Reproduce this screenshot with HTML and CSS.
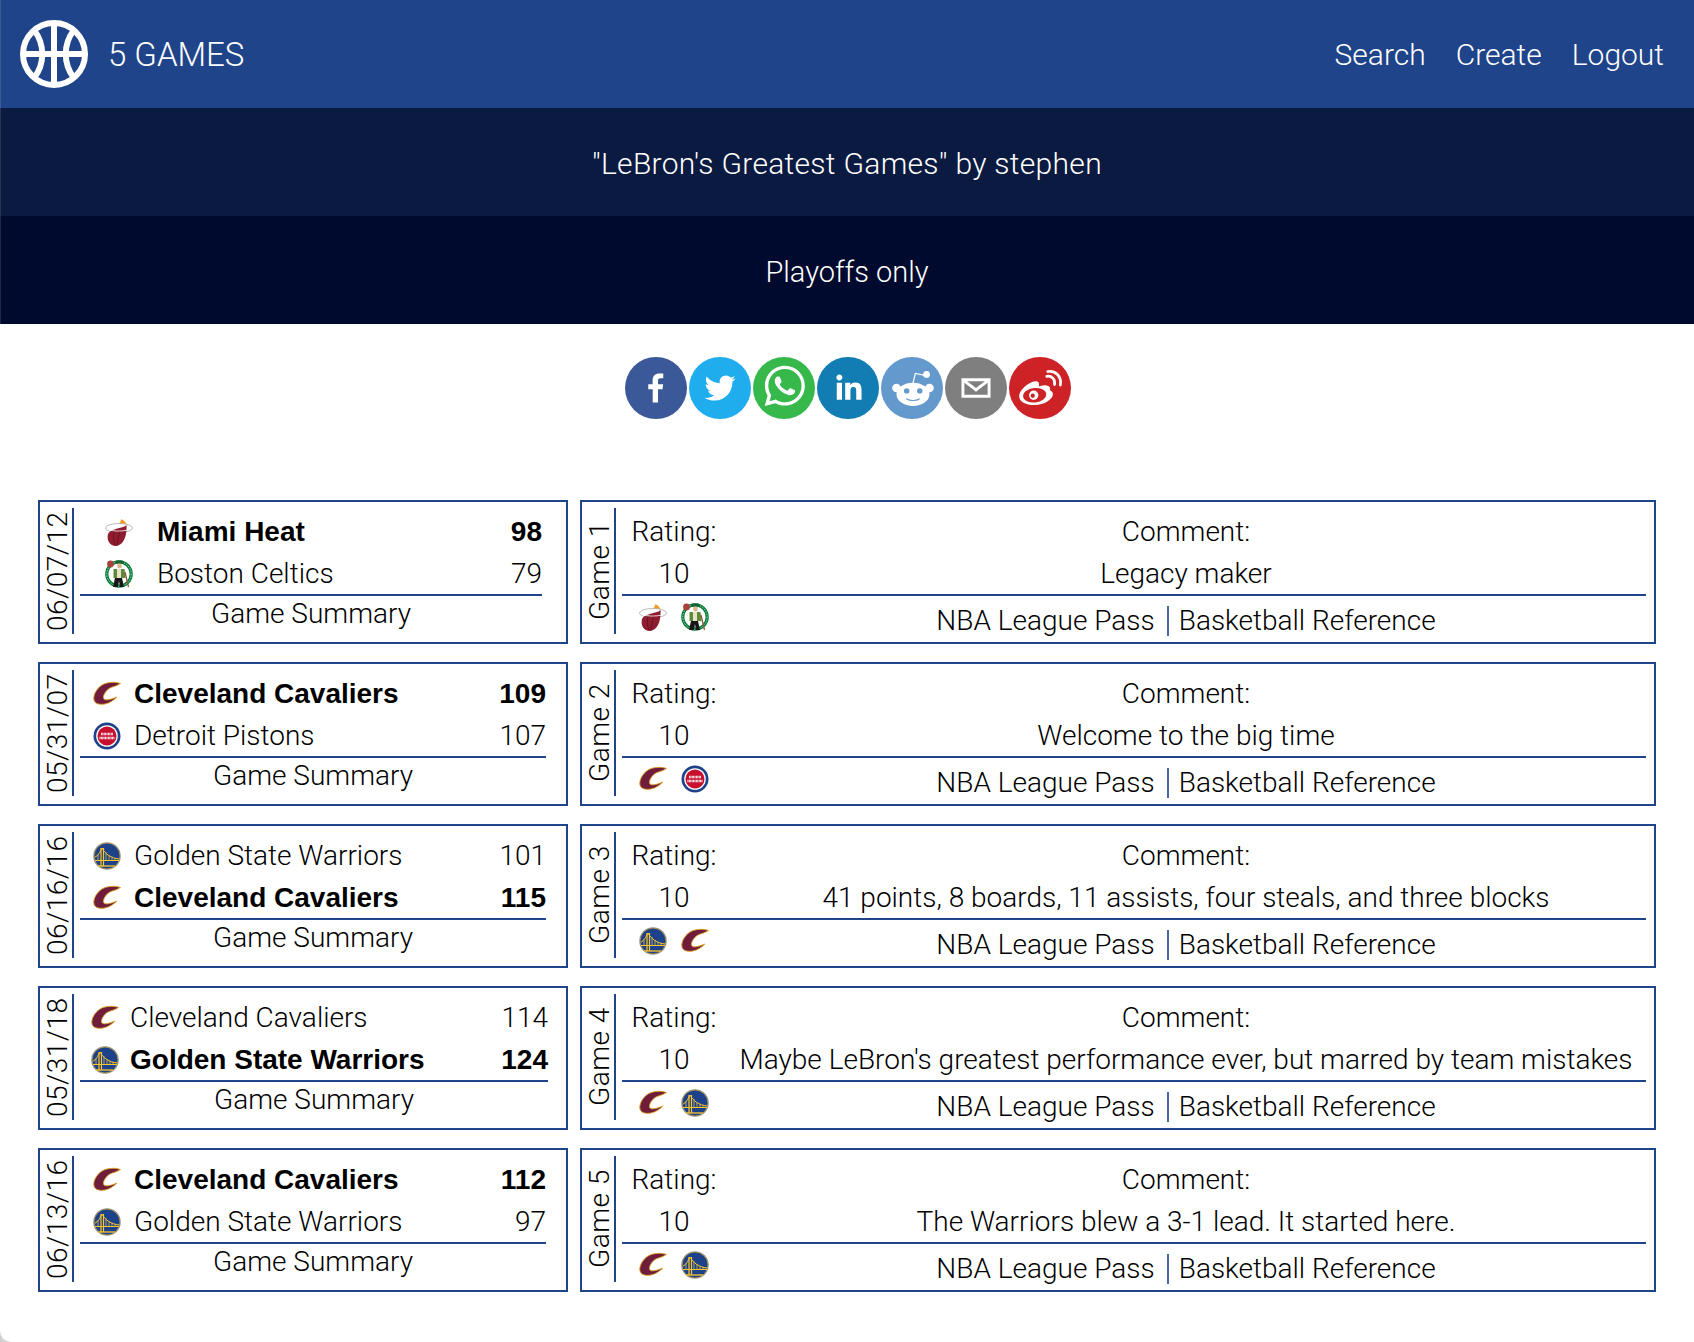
FILE: index.html
```html
<!DOCTYPE html>
<html lang="en">
<head>
	<meta charset="UTF-8">
	<meta name="viewport" content="width=device-width, initial-scale=1.0">
	<title>5 Games</title>
	<link rel="stylesheet" href="styles.css">
</head>
<body>
	<svg class="defs" aria-hidden="true">
		<symbol id="heat" viewBox="0 0 28 28">
			<path d="M13 7c1.500-1.500 3-3 3-6 .8 1 1.500 1.500 2 .5.5 1.500 4 3 3.500 6z" fill="#f39c1f"/>
			<ellipse cx="14" cy="10" rx="13.500" ry="4.500" fill="#fff" stroke="#a7a9ac" stroke-width=".8"/>
			<path d="M21.500 7c.5 7-1 20-10.500 21-6.500 0-9.500-6-8-12 1.500-3.500 8-5 11-6 3-1 5.500-1 7.500-3z" fill="#8f1d2f"/>
			<path d="M9 13c-1 4-1 9 1 14M15 12c-1 4-2 9-3 15" stroke="#5f0f1e" stroke-width=".8" fill="none"/>
			<path d="M3 11.500c5 2 14 2 20 .5" stroke="#fff" stroke-width=".8" fill="none"/>
		</symbol>
		<symbol id="celtics" viewBox="0 0 28 28">
			<circle cx="14" cy="14" r="12.200" fill="#fff" stroke="#007a33" stroke-width="3.200"/>
			<circle cx="14" cy="14" r="12.200" fill="none" stroke="#fff" stroke-width=".7" stroke-dasharray="1.500 1.200"/>
			<circle cx="5.500" cy="4" r="3.400" fill="#a8423d"/>
			<path d="M10 3.500h9l-1.500-3h-6z" fill="#1c5f33"/>
			<circle cx="14.500" cy="6" r="2.400" fill="#d9b98c"/>
			<path d="M8.500 9h11l1 9h-12z" fill="#5f8a3a"/>
			<path d="M12 9h4v9h-4z" fill="#e8e4c8"/>
			<path d="M10 18l-2 9h5l1-6 1 6h4l-2-9z" fill="#161616"/>
			<path d="M20 12l3.500 15" stroke="#8a5d3b" stroke-width="1.300"/>
		</symbol>
		<symbol id="cavs" viewBox="0 0 28 28">
			<path d="M27.500 3.500C22 1.500 14 2 9 5 3 9 .5 15 .8 19c.4 5 6.200 6 11.200 5 5-1 9-4 12-7-5 2-11 4-13 2-2-2.500 2-9 6-11 3-1.500 7-2 10.500-4.500z" fill="#6f1d3a" stroke="#e0a526" stroke-width=".9"/>
		</symbol>
		<symbol id="pistons" viewBox="0 0 28 28">
			<circle cx="14" cy="14" r="13.500" fill="#1d428a"/>
			<circle cx="14" cy="14" r="10.800" fill="#fff"/>
			<circle cx="14" cy="14" r="9.500" fill="#c8102e"/>
			<path d="M8 12h12M6.500 16h15" stroke="#fff" stroke-width="2.400" stroke-dasharray=".9 .5" fill="none"/>
		</symbol>
		<symbol id="warriors" viewBox="0 0 28 28">
			<circle cx="14" cy="14" r="13.800" fill="#8f9bb3"/>
			<circle cx="14" cy="14" r="13" fill="#1d428a" stroke="#d8a92c" stroke-width=".7"/>
			<path d="M8 6v18M10.500 6v18M2 18.500h24" stroke="#ffc72c" stroke-width="1.200" fill="none"/>
			<path d="M9 6c3 6 9 10 17 11M9 6c-2 4-4 8-7 9" stroke="#ffc72c" stroke-width="1" fill="none"/>
			<path d="M13 10v8M16 13v5M19 15v3M22 16v2M5 12v6" stroke="#ffc72c" stroke-width=".7"/>
			<path d="M5 24h17" stroke="#ffc72c" stroke-width="1.300"/>
		</symbol>
	</svg>

	<header class="top-bar">
		<a class="brand" href="#">
			<svg class="brand-logo" viewBox="0 0 68 68">
				<g fill="none" stroke="#fff" stroke-width="6">
					<circle cx="34" cy="34" r="31"/>
					<path d="M34 2v64M2 34h64"/>
					<path d="M14 10c11 14 11 34 0 48M54 10c-11 14-11 34 0 48"/>
				</g>
			</svg>
			<span class="brand-name">5 GAMES</span>
		</a>
		<nav class="top-nav">
			<a href="#">Search</a>
			<a href="#">Create</a>
			<a href="#">Logout</a>
		</nav>
	</header>
	<div class="title-bar">"LeBron's Greatest Games" by stephen</div>
	<div class="note-bar">Playoffs only</div>

	<div class="share">
		<svg class="share-icon" viewBox="0 0 64 64"><circle cx="32" cy="32" r="32" fill="#3b5998"/><path fill="#fff" d="M34.100 47V33.300h4.600l.7-5.300h-5.300v-3.400c0-1.500.4-2.600 2.600-2.600l2.800 0v-4.800c-.5-.1-2.200-.2-4.100-.2-4.100 0-6.900 2.500-6.900 7V28H24v5.300h4.600V47h5.500z"/></svg>
		<svg class="share-icon" viewBox="0 0 64 64"><circle cx="32" cy="32" r="32" fill="#1fadee"/><path fill="#fff" d="M48 22.100c-1.200.5-2.400.9-3.800 1 1.400-.8 2.400-2.100 2.900-3.600-1.300.8-2.700 1.300-4.200 1.600C41.700 19.800 40 19 38.200 19c-3.600 0-6.600 2.900-6.600 6.600 0 .5.1 1 .2 1.500-5.500-.3-10.300-2.900-13.500-6.900-.6 1-.9 2.100-.9 3.300 0 2.300 1.200 4.300 2.900 5.500-1.100 0-2.100-.3-3-.8v.1c0 3.200 2.300 5.800 5.300 6.400-.6.1-1.100.2-1.700.2-.4 0-.8 0-1.200-.1.8 2.600 3.300 4.500 6.100 4.600-2.200 1.800-5.100 2.800-8.200 2.800-.5 0-1.100 0-1.600-.1 2.900 1.900 6.400 2.900 10.100 2.900 12.100 0 18.700-10 18.700-18.700v-.8c1.300-.9 2.400-2 3.300-3.300z"/></svg>
		<svg class="share-icon" viewBox="0 0 64 64"><circle cx="32" cy="32" r="32" fill="#37b84b"/><path fill="#fff" d="m42.323 33.933c-.518-.259-3.047-1.496-3.521-1.667-.471-.173-.816-.259-1.160.259-.342.510-1.331 1.665-1.631 2.006-.300.337-.601.362-1.113.129-.518-.259-2.180-.803-4.148-2.563-1.533-1.372-2.563-3.055-2.866-3.573-.300-.518-.034-.803.225-1.061.233-.233.518-.595.777-.906.254-.311.337-.518.513-.854.171-.362.085-.647-.044-.906-.129-.259-1.160-2.796-1.590-3.806-.414-1.010-.841-.880-1.160-.880-.298-.026-.642-.026-.984-.026-.347 0-.906.129-1.377.621-.471.518-1.802 1.761-1.802 4.272 0 2.511 1.846 4.945 2.102 5.307.259.337 3.635 5.515 8.803 7.741 1.232.518 2.190.828 2.941 1.087 1.232.388 2.356.337 3.244.207.992-.155 3.050-1.243 3.480-2.460.440-1.217.440-2.227.311-2.460-.129-.233-.466-.362-.984-.595m-9.401 12.844h-.026c-3.055 0-6.084-.828-8.725-2.382l-.621-.370-6.473 1.683 1.735-6.291-.414-.647c-1.709-2.718-2.615-5.851-2.615-9.077 0-9.398 7.689-17.062 17.160-17.062 4.583 0 8.880 1.786 12.117 5.023 3.236 3.210 5.023 7.508 5.023 12.065-.008 9.398-7.697 17.062-17.147 17.062m14.589-31.588c-3.935-3.806-9.113-5.955-14.628-5.955-11.361 0-20.608 9.207-20.616 20.526 0 3.617.948 7.146 2.752 10.263l-2.926 10.636 10.933-2.853c3.014 1.631 6.405 2.496 9.856 2.498h.010c11.366 0 20.619-9.209 20.624-20.531 0-5.481-2.141-10.641-6.032-14.519"/></svg>
		<svg class="share-icon" viewBox="0 0 64 64"><circle cx="32" cy="32" r="32" fill="#127db2"/><path fill="#fff" d="M20.400 44h5.400V26.600h-5.400V44zM23.100 18c-1.700 0-3.100 1.400-3.100 3.100 0 1.700 1.400 3.100 3.100 3.100 1.700 0 3.100-1.400 3.100-3.100 0-1.700-1.400-3.100-3.100-3.100zM39.500 26.200c-2.600 0-4.400 1.400-5.100 2.800h-.1v-2.400h-5.200V44h5.400v-8.600c0-2.300.4-4.500 3.200-4.500 2.800 0 2.800 2.600 2.800 4.600V44H46v-9.500C46 29.800 45 26.200 39.500 26.200z"/></svg>
		<svg class="share-icon" viewBox="0 0 64 64"><circle cx="32" cy="32" r="32" fill="#6499ce"/><g fill="#fff"><ellipse cx="33" cy="38.500" rx="17" ry="12"/><circle cx="16" cy="32" r="4.500"/><circle cx="50" cy="32" r="4.500"/><circle cx="47" cy="18" r="3.500"/></g><path d="M33 27l2.500-10 10 2" fill="none" stroke="#fff" stroke-width="1.300"/><circle cx="26.500" cy="35" r="2.800" fill="#6499ce"/><circle cx="40" cy="35" r="2.800" fill="#6499ce"/><path d="M26 43c4 2.500 10 2.500 14 0" fill="none" stroke="#6499ce" stroke-width="1.200"/></svg>
		<svg class="share-icon" viewBox="0 0 64 64"><circle cx="32" cy="32" r="32" fill="#7f7f7f"/><path fill="#fff" d="M17 22v20h30V22H17zM41.100 25L32 32.100 22.900 25h18.200zM20 39V26.600l12 9.300 12-9.300V39H20z"/></svg>
		<svg class="share-icon" viewBox="0 0 64 64"><circle cx="32" cy="32" r="32" fill="#cd2327"/><path fill="#fff" transform="translate(0 6.500) scale(1 .87)" d="M10.500 39c0-6 7-14 14-17 4-1.700 6.500-.5 6.500 3 0 1.200-.3 2-.2 2.300.6.300 3-1.200 6-1.200 3.500 0 5.700 1.700 5.700 4 0 .8-.4 1.700-.4 2 .2.500 3.200 1 3.200 4.700 0 6-8.800 12.700-19 12.700-9 0-15.800-4-15.800-10.500z"/><ellipse cx="26.500" cy="39.500" rx="12" ry="7.500" transform="rotate(-6 26.500 39.500)" fill="#cd2327"/><circle cx="25.500" cy="39.500" r="4.800" fill="#fff"/><circle cx="24.500" cy="40" r="2.200" fill="#cd2327"/><path d="M39 20c5-1 9 3 8 8.500M40 15c8-1.500 14.500 5 13 14" fill="none" stroke="#fff" stroke-width="2.800" stroke-linecap="round"/></svg>
	</div>

	<main class="games">
		<section class="card score-card">
			<div class="side-label">06/07/12</div>
			<div class="card-body teams teams-a">
				<svg class="logo"><use href="#heat"/></svg><b>Miami Heat</b><b class="pts">98</b>
				<svg class="logo"><use href="#celtics"/></svg><span>Boston Celtics</span><span class="pts">79</span>
				<a class="summary" href="#">Game Summary</a>
			</div>
		</section>
		<section class="card detail-card">
			<div class="side-label">Game 1</div>
			<div class="card-body detail">
				<div>Rating:</div><div>Comment:</div>
				<div>10</div><div class="comment">Legacy maker</div>
				<div class="mini-logos"><svg class="logo"><use href="#heat"/></svg><svg class="logo"><use href="#celtics"/></svg></div>
				<div class="links"><a href="#">NBA League Pass</a><a class="ref-link" href="#">Basketball Reference</a></div>
			</div>
		</section>

		<section class="card score-card">
			<div class="side-label">05/31/07</div>
			<div class="card-body teams teams-b">
				<svg class="logo"><use href="#cavs"/></svg><b>Cleveland Cavaliers</b><b class="pts">109</b>
				<svg class="logo"><use href="#pistons"/></svg><span>Detroit Pistons</span><span class="pts">107</span>
				<a class="summary" href="#">Game Summary</a>
			</div>
		</section>
		<section class="card detail-card">
			<div class="side-label">Game 2</div>
			<div class="card-body detail">
				<div>Rating:</div><div>Comment:</div>
				<div>10</div><div class="comment">Welcome to the big time</div>
				<div class="mini-logos"><svg class="logo"><use href="#cavs"/></svg><svg class="logo"><use href="#pistons"/></svg></div>
				<div class="links"><a href="#">NBA League Pass</a><a class="ref-link" href="#">Basketball Reference</a></div>
			</div>
		</section>

		<section class="card score-card">
			<div class="side-label">06/16/16</div>
			<div class="card-body teams teams-b">
				<svg class="logo"><use href="#warriors"/></svg><span>Golden State Warriors</span><span class="pts">101</span>
				<svg class="logo"><use href="#cavs"/></svg><b>Cleveland Cavaliers</b><b class="pts">115</b>
				<a class="summary" href="#">Game Summary</a>
			</div>
		</section>
		<section class="card detail-card">
			<div class="side-label">Game 3</div>
			<div class="card-body detail">
				<div>Rating:</div><div>Comment:</div>
				<div>10</div><div class="comment">41 points, 8 boards, 11 assists, four steals, and three blocks</div>
				<div class="mini-logos"><svg class="logo"><use href="#warriors"/></svg><svg class="logo"><use href="#cavs"/></svg></div>
				<div class="links"><a href="#">NBA League Pass</a><a class="ref-link" href="#">Basketball Reference</a></div>
			</div>
		</section>

		<section class="card score-card">
			<div class="side-label">05/31/18</div>
			<div class="card-body teams teams-c">
				<svg class="logo"><use href="#cavs"/></svg><span>Cleveland Cavaliers</span><span class="pts">114</span>
				<svg class="logo"><use href="#warriors"/></svg><b>Golden State Warriors</b><b class="pts">124</b>
				<a class="summary" href="#">Game Summary</a>
			</div>
		</section>
		<section class="card detail-card">
			<div class="side-label">Game 4</div>
			<div class="card-body detail">
				<div>Rating:</div><div>Comment:</div>
				<div>10</div><div class="comment">Maybe LeBron's greatest performance ever, but marred by team mistakes</div>
				<div class="mini-logos"><svg class="logo"><use href="#cavs"/></svg><svg class="logo"><use href="#warriors"/></svg></div>
				<div class="links"><a href="#">NBA League Pass</a><a class="ref-link" href="#">Basketball Reference</a></div>
			</div>
		</section>

		<section class="card score-card">
			<div class="side-label">06/13/16</div>
			<div class="card-body teams teams-b">
				<svg class="logo"><use href="#cavs"/></svg><b>Cleveland Cavaliers</b><b class="pts">112</b>
				<svg class="logo"><use href="#warriors"/></svg><span>Golden State Warriors</span><span class="pts">97</span>
				<a class="summary" href="#">Game Summary</a>
			</div>
		</section>
		<section class="card detail-card">
			<div class="side-label">Game 5</div>
			<div class="card-body detail">
				<div>Rating:</div><div>Comment:</div>
				<div>10</div><div class="comment">The Warriors blew a 3-1 lead. It started here.</div>
				<div class="mini-logos"><svg class="logo"><use href="#cavs"/></svg><svg class="logo"><use href="#warriors"/></svg></div>
				<div class="links"><a href="#">NBA League Pass</a><a class="ref-link" href="#">Basketball Reference</a></div>
			</div>
		</section>
	</main>
</body>
</html>
```
FILE: styles.css
```css
html {
	height: 100%;
}

body {
	margin: 0;
	height: 100%;
	position: relative;
	background: #fff;
	color: #000;
	font-family: Roboto, "Liberation Sans", Arial, sans-serif;
	font-weight: 300;
	font-size: 28px;
	line-height: 42px;
	overflow: hidden;
}

/* Скруглённый угол окна */
body::after {
	content: "";
	position: absolute;
	left: 0;
	bottom: 0;
	width: 10px;
	height: 10px;
	background: radial-gradient(circle at 100% 0, transparent 8.5px, #cfcfcf 10.5px);
}

a {
	color: inherit;
	text-decoration: none;
}

b {
	font-family: "Liberation Sans", Arial, sans-serif;
	font-weight: 700;
}

.defs {
	position: absolute;
	width: 0;
	height: 0;
}

/* Верхние полосы */
.top-bar {
	height: 108px;
	box-sizing: border-box;
	display: flex;
	align-items: center;
	justify-content: space-between;
	padding: 0 30px 0 20px;
	background: #1f4489;
	color: #fff;
	font-size: 33px;
}

.top-bar, .title-bar, .note-bar {
	box-shadow: inset 1px 0 rgba(255, 255, 255, 0.12);
}

.brand {
	display: flex;
	align-items: center;
	gap: 20px;
}

.brand-logo {
	width: 68px;
	height: 68px;
}

.brand-name {
	padding-top: 2px;
}

.top-nav {
	display: flex;
	gap: 30px;
	padding-top: 2px;
	font-size: 30px;
}

.title-bar, .note-bar {
	height: 108px;
	box-sizing: border-box;
	padding-top: 4px;
	display: flex;
	align-items: center;
	justify-content: center;
	color: #fff;
}

.title-bar {
	background: #0b1a40;
	font-size: 30px;
	letter-spacing: 0.3px;
}

.note-bar {
	background: #000a2e;
	font-size: 29px;
}

/* Кнопки "поделиться" */
.share {
	display: flex;
	justify-content: center;
	gap: 2px;
	padding: 33px 0 0 2px;
}

.share-icon {
	width: 62px;
	height: 62px;
}

/* Карточки игр */
.games {
	display: grid;
	grid-template-columns: 530px 1076px;
	gap: 18px 12px;
	margin: 81px 38px 0;
}

.card {
	display: flex;
	height: 144px;
	box-sizing: border-box;
	border: 2px solid #1f4489;
	padding: 6px 8px 8px 0;
}

/* Подпись повёрнута, поэтому линия справа задаётся через border-left */
.side-label {
	width: 34px;
	box-sizing: border-box;
	border-left: 2px solid #1f4489;
	padding-right: 4px;
	display: flex;
	align-items: center;
	justify-content: center;
	writing-mode: vertical-rl;
	transform: rotate(180deg);
	line-height: 30px;
	letter-spacing: 0.5px;
}

.card-body {
	margin-left: 6px;
	display: grid;
	grid-template-rows: 42px 41px 40px;
	padding-top: 3px;
}

.teams-a {
	width: 462px;
	grid-template-columns: 77px 1fr auto;
}

.teams-b {
	width: 466px;
	grid-template-columns: 54px 1fr auto;
}

.teams-c {
	width: 468px;
	grid-template-columns: 50px 1fr auto;
}

.logo {
	width: 28px;
	height: 28px;
	place-self: center;
}

.pts {
	text-align: right;
}

.summary {
	grid-column: 1 / -1;
	border-top: 2px solid #1f4489;
	text-align: center;
	line-height: 36px;
}

.detail {
	flex: 1;
	grid-template-columns: 104px 1fr;
	text-align: center;
}

.mini-logos, .links {
	border-top: 2px solid #1f4489;
}

.mini-logos {
	display: flex;
	justify-content: center;
	align-items: flex-start;
	padding-top: 4px;
}

.mini-logos .logo {
	margin: 0 7px;
}

.links {
	padding-top: 10px;
	line-height: 30px;
	white-space: nowrap;
}

.ref-link {
	display: inline-block;
	margin-left: 12px;
	padding-left: 10px;
	border-left: 2px solid #4a68a3;
}
```
